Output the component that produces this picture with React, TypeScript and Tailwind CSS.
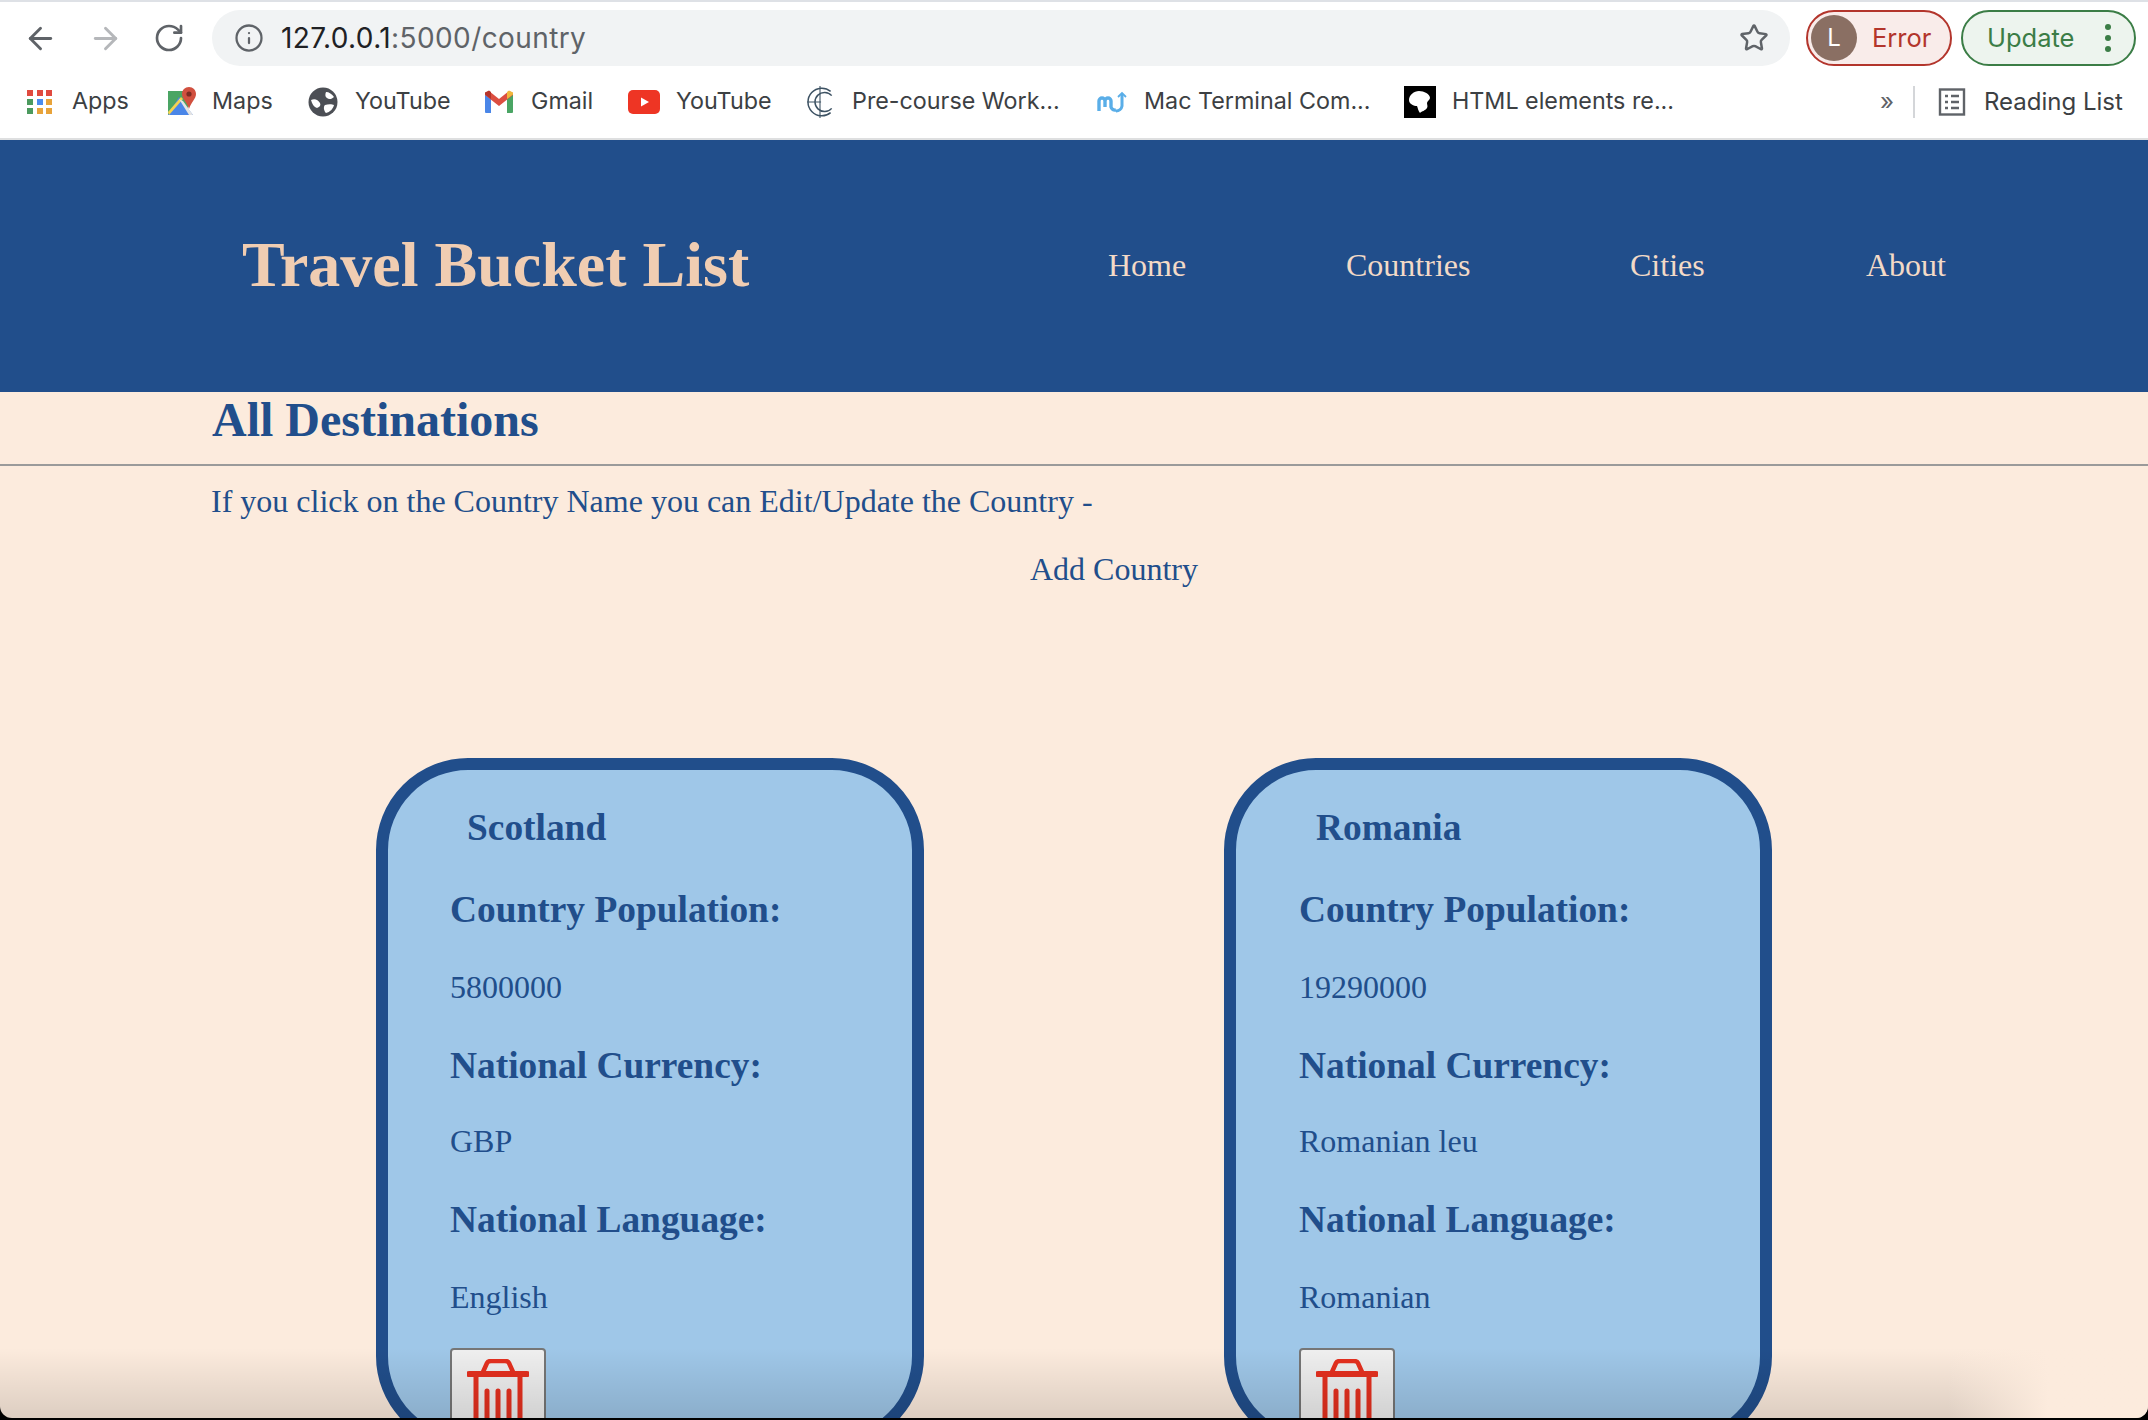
import React from 'react';
import { ArrowLeft, ArrowRight, RotateCw, Info, Star } from 'lucide-react';

const NAV_LINKS = [
    { label: 'Home', width: 'w-[238px]' },
    { label: 'Countries', width: 'w-[284px]' },
    { label: 'Cities', width: 'w-[236px]' },
    { label: 'About', width: 'w-[80px]' },
];

const COUNTRIES = [
    { name: 'Scotland', population: '5800000', currency: 'GBP', language: 'English', pad: 'pl-[62px]', indent: 'pl-[17px]' },
    { name: 'Romania', population: '19290000', currency: 'Romanian leu', language: 'Romanian', pad: 'pl-[63px]', indent: 'pl-[17px]' },
];

const AppsIcon = () => {
    const colors = ['bg-[#e04a3f]', 'bg-[#e04a3f]', 'bg-[#e04a3f]', 'bg-[#4c9a5e]', 'bg-[#4a8cf0]', 'bg-[#e8a33a]', 'bg-[#4c9a5e]', 'bg-[#e8a33a]', 'bg-[#e8a33a]'];
    return (
        <div className="grid grid-cols-3 gap-[3px] w-[26px] ml-[1px]">
            {colors.map((c, i) => <div key={i} className={`w-[6px] h-[6px] ${c}`} />)}
        </div>
    );
};

const MapsIcon = () => (
    <svg width="30" height="30" viewBox="0 0 30 30">
        <path d="M1 4h20v24H1z" fill="#4aa564" />
        <path d="M1 28 L12 10 L26 28z" fill="#4a86e8" />
        <path d="M1 25 L14 10 L16 12 L2 28z" fill="#f5d34f" />
        <path d="M16 14 L26 28 H22 L12 12z" fill="#e4e4e4" />
        <path d="M22 0c-4 0-7 3-7 7 0 5 5 8 7 15 2-7 7-10 7-15 0-4-3-7-7-7z" fill="#d1503f" />
        <circle cx="22" cy="7" r="2.6" fill="#7d2b22" />
    </svg>
);

const GlobeIcon = () => (
    <svg width="30" height="30" viewBox="0 0 30 30">
        <circle cx="15" cy="15" r="14.5" fill="#4c4f55" />
        <path d="M3 13c4-2 7 0 9 3 1 2 0 4-3 5-3-1-5-4-6-8zM18 5c3 0 6 2 8 5-2 2-5 3-7 1-2-1-2-4-1-6zM17 18c3-1 7-1 9 0-1 4-4 7-8 8-2-2-3-6-1-8z" fill="#fff" />
    </svg>
);

const GmailIcon = () => (
    <svg width="30" height="24" viewBox="0 0 30 24">
        <path d="M1 3v19a1 1 0 0 0 1 1h5V9z" fill="#4a86e8" />
        <path d="M29 3v19a1 1 0 0 1-1 1h-5V9z" fill="#4aa564" />
        <path d="M1 5 L15 16 L29 5 V3 L25 1 L15 9 L5 1 L1 3z" fill="#dc4e41" />
        <path d="M23 9 L29 4.5 V2.5 L25 .5 L23 2z" fill="#f0b73c" />
        <path d="M7 9 L1 4.5 V2.5 L5 .5 L7 2z" fill="#b5342a" />
    </svg>
);

const YoutubeIcon = () => (
    <svg width="32" height="24" viewBox="0 0 32 24">
        <rect width="32" height="24" rx="5" fill="#ee3524" />
        <path d="M13 7.5 L21 12 L13 16.5z" fill="#fff" />
    </svg>
);

const CourseIcon = () => (
    <svg width="30" height="34" viewBox="0 0 28 32" fill="none" stroke="#3d5263" strokeWidth="1.4">
        <path d="M24 6a13 13 0 1 0 0 20" />
        <path d="M25 10a9 9 0 1 0 0 12" />
        <path d="M14 1v30M2 16h13" strokeWidth="1" />
    </svg>
);

const TerminalIcon = () => (
    <svg width="30" height="22" viewBox="0 0 30 22" fill="none" stroke="#5aaee8" strokeWidth="3.4">
        <path d="M2 20V10a3 3 0 0 1 6 0v6M8 10a3 3 0 0 1 6 0v6a4 4 0 0 0 5 3" />
        <path d="M19 20a6 6 0 0 0 6-5V3" strokeWidth="3" />
        <path d="M21 6l4-4 4 4" strokeWidth="1.8" />
    </svg>
);

const MdnIcon = () => (
    <svg width="32" height="32" viewBox="0 0 32 32">
        <rect width="32" height="32" fill="#000" />
        <path d="M5 14c0-5 5-9 10-9 5 0 11 3 11 7 0 2-3 3-3 5 0 2 1 3 0 5-2 3-5 3-7 5-2-2-2-5-3-7-3 0-8-2-8-6z" fill="#fff" />
    </svg>
);

const ReadingListIcon = () => (
    <svg width="28" height="28" viewBox="0 0 28 28" fill="none" stroke="#5f6368" strokeWidth="2.4">
        <rect x="2" y="1.5" width="24" height="25" />
        <path d="M7 8h3M13 8h8M7 14h3M13 14h8M7 20h3M13 20h8" />
    </svg>
);

const TrashIcon = () => (
    <svg width="62" height="74" viewBox="0 0 62 74" fill="none" stroke="#e5301f">
        <path d="M16 13 L20 4 Q21 2 24 2 H38 Q41 2 42 4 L46 13" strokeWidth="4.5" />
        <path d="M2 15 H60" strokeWidth="6" strokeLinecap="round" />
        <path d="M9 15 V70 H53 V15" strokeWidth="5" />
        <path d="M20 32 V62 M31 32 V62 M42 32 V62" strokeWidth="5" strokeLinecap="round" />
    </svg>
);

const Bookmark: React.FC<{ icon: React.ReactNode; label: string; iconWidth: string; width: string }> = ({ icon, label, iconWidth, width }) => (
    <div className={`flex items-center shrink-0 ${width}`}>
        <div className={`flex justify-start shrink-0 ${iconWidth}`}>{icon}</div>
        <span className="whitespace-nowrap">{label}</span>
    </div>
);

const CountryCard: React.FC<{ country: typeof COUNTRIES[number] }> = ({ country }) => (
    <div className={`w-[548px] h-[690px] shrink-0 border-[12px] border-[#214e8b] rounded-[92px] bg-[#9fc7e8] pt-[28px] text-[#214e8b] ${country.pad}`}>
        <h2 className={`text-[37.4px] leading-[60px] font-bold ${country.indent}`}>{country.name}</h2>
        <h3 className="text-[37.4px] leading-[44px] font-bold mt-[30px]">Country Population:</h3>
        <p className="text-[32px] leading-[40px] mt-[35px]">{country.population}</p>
        <h3 className="text-[37.4px] leading-[44px] font-bold mt-[37px]">National Currency:</h3>
        <p className="text-[32px] leading-[40px] mt-[33px]">{country.currency}</p>
        <h3 className="text-[37.4px] leading-[44px] font-bold mt-[37px]">National Language:</h3>
        <p className="text-[32px] leading-[40px] mt-[35px]">{country.language}</p>
        <button className="block w-[96px] h-[90px] mt-[31px] bg-[#efefef] border-2 border-[#767676] rounded-[4px] pt-[6px] pl-[15px]">
            <TrashIcon />
        </button>
    </div>
);

const App: React.FC = () => {
    return (
        <div className="relative w-[2148px] h-[1420px] overflow-hidden bg-black font-['Liberation_Serif',serif]">
            <div className="relative h-[1418px] overflow-hidden rounded-b-[12px] bg-[#fcebdd]">
                {/* browser chrome */}
                <div className="h-[140px] bg-white border-b-2 border-[#dedfe0] border-t-2 border-t-[#dee1e6] font-['Inter',sans-serif] text-[#3c4043]">
                    <div className="h-[64px] flex items-center pt-[8px]">
                        <div className="w-[212px] flex items-center pl-[23px] gap-[30px]">
                            <ArrowLeft size={35} strokeWidth={2} className="text-[#5f6368]" />
                            <ArrowRight size={35} strokeWidth={2} className="text-[#b5b7ba]" />
                            <RotateCw size={32} strokeWidth={2} className="text-[#5f6368]" />
                        </div>
                        <div className="w-[1578px] h-[56px] rounded-[28px] bg-[#f1f3f4] flex items-center pl-[22px] pr-[21px]">
                            <Info size={30} strokeWidth={1.8} className="text-[#5f6368]" />
                            <span className="ml-[17px] text-[28px] tracking-[0.4px] text-[#202124]">127.0.0.1<span className="text-[#5f6368]">:5000/country</span></span>
                            <Star size={30} strokeWidth={2} className="ml-auto text-[#5f6368]" />
                        </div>
                        <div className="ml-[16px] w-[146px] h-[56px] rounded-[28px] border-2 border-[#b3352c] bg-[#f9ecea] flex items-center pl-[3px] text-[#b3352c] text-[25.5px]">
                            <div className="w-[46px] h-[46px] rounded-full bg-[#8a6f63] text-white flex items-center justify-center text-[24px]">L</div>
                            <span className="ml-[15px] pt-[1px]">Error</span>
                        </div>
                        <div className="ml-[9px] w-[175px] h-[56px] rounded-[28px] border-2 border-[#3b7d46] bg-[#edf4ee] flex items-center pl-[24px] text-[#3b7d46] text-[25.5px]">
                            <span className="pt-[1px]">Update</span>
                            <div className="ml-[31px] flex flex-col gap-[5px]">
                                <div className="w-[6px] h-[6px] rounded-full bg-[#3b7d46]" />
                                <div className="w-[6px] h-[6px] rounded-full bg-[#3b7d46]" />
                                <div className="w-[6px] h-[6px] rounded-full bg-[#3b7d46]" />
                            </div>
                        </div>
                    </div>
                    <div className="h-[70px] flex items-center pl-[26px] text-[23.3px] pt-[1px]">
                        <Bookmark icon={<AppsIcon />} label="Apps" iconWidth="w-[46px]" width="w-[141px]" />
                        <Bookmark icon={<MapsIcon />} label="Maps" iconWidth="w-[45px]" width="w-[141px]" />
                        <Bookmark icon={<GlobeIcon />} label="YouTube" iconWidth="w-[47px]" width="w-[176px]" />
                        <Bookmark icon={<GmailIcon />} label="Gmail" iconWidth="w-[47px]" width="w-[144px]" />
                        <Bookmark icon={<YoutubeIcon />} label="YouTube" iconWidth="w-[48px]" width="w-[177px]" />
                        <Bookmark icon={<CourseIcon />} label="Pre-course Work..." iconWidth="w-[47px]" width="w-[292px]" />
                        <Bookmark icon={<TerminalIcon />} label="Mac Terminal Com..." iconWidth="w-[47px]" width="w-[307px]" />
                        <Bookmark icon={<MdnIcon />} label="HTML elements re..." iconWidth="w-[48px]" width="w-[476px]" />
                        <span className="w-[33px] text-[24px] text-[#5f6368]">»</span>
                        <div className="w-[2px] h-[32px] bg-[#d4d6d9] mr-[23px]" />
                        <ReadingListIcon />
                        <span className="ml-[18px] text-[24px] whitespace-nowrap">Reading List</span>
                    </div>
                </div>

                {/* site header */}
                <header className="h-[252px] bg-[#214e8b] flex items-center pl-[242px] pb-[2px]">
                    <h1 className="w-[866px] text-[64px] font-bold text-[#f0cdb2] whitespace-nowrap">Travel Bucket List</h1>
                    <nav className="flex text-[32px] text-[#f3dac7]">
                        {NAV_LINKS.map(link => (
                            <a key={link.label} className={link.width}>{link.label}</a>
                        ))}
                    </nav>
                </header>

                <main className="text-[#214e8b]">
                    <h1 className="pl-[212px] h-[74px] pt-[2px] text-[48px] leading-[52px] font-bold border-b-2 border-[#9a9a9a]">All Destinations</h1>
                    <p className="pl-[211px] mt-[15px] text-[32px] leading-[40px]">If you click on the Country Name you can Edit/Update the Country -</p>
                    <p className="pl-[1030px] mt-[28px] text-[32px] leading-[40px]">Add Country</p>
                    <div className="flex gap-[300px] pl-[376px] mt-[169px]">
                        {COUNTRIES.map(country => <CountryCard key={country.name} country={country} />)}
                    </div>
                </main>

                {/* dock shadow at the bottom of the window */}
                <div className="absolute left-0 right-0 bottom-0 h-[70px] bg-gradient-to-b from-transparent to-[#00000020] pointer-events-none" />
                <div className="absolute right-0 bottom-0 h-[70px] w-[200px] bg-gradient-to-r from-transparent to-[#fcebdd] to-50% pointer-events-none" />
            </div>
        </div>
    );
};

export default App;
